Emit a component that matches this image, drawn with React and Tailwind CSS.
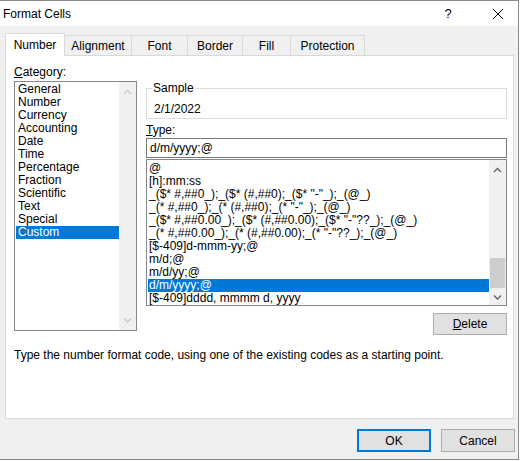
const categories = [
  "General",
  "Number",
  "Currency",
  "Accounting",
  "Date",
  "Time",
  "Percentage",
  "Fraction",
  "Scientific",
  "Text",
  "Special",
  "Custom",
];

const types = [
  "@",
  "[h]:mm:ss",
  '_($* #,##0_);_($* (#,##0);_($* "-"_);_(@_)',
  '_(* #,##0_);_(* (#,##0);_(* "-"_);_(@_)',
  '_($* #,##0.00_);_($* (#,##0.00);_($* "-"??_);_(@_)',
  '_(* #,##0.00_);_(* (#,##0.00);_(* "-"??_);_(@_)',
  "[$-409]d-mmm-yy;@",
  "m/d;@",
  "m/d/yy;@",
  "d/m/yyyy;@",
  "[$-409]dddd, mmmm d, yyyy",
];

const tabs = [
  { label: "Alignment", w: "w-[67px]" },
  { label: "Font", w: "w-[56px]" },
  { label: "Border", w: "w-[55px]" },
  { label: "Fill", w: "w-[48px]" },
  { label: "Protection", w: "w-[74px]" },
];

const Chevron = ({ down = false, color = "#606060" }) => (
  <svg width="9" height="6" viewBox="0 0 9 6">
    <path
      d={down ? "M1 1.5 L4.5 5 L8 1.5" : "M1 5 L4.5 1.5 L8 5"}
      fill="none"
      stroke={color}
      strokeWidth="1.3"
    />
  </svg>
);

const App = () => {
  return (
    <div className="w-[523px] h-[461px] bg-white overflow-hidden font-['Liberation_Sans',Arial,sans-serif] text-[12px] text-black">
      <div className="w-[519px] h-[460px] bg-[#f0f0f0] border-r border-b border-t border-[#8a8a8a] flex flex-col">
        {/* Title bar */}
        <div className="h-[25px] bg-white flex items-center pl-[3px] shrink-0">
          <span className="text-[12px]">Format Cells</span>
          <span className="ml-auto w-[12px] text-center text-[13px] mr-[38px]">?</span>
          <svg width="12" height="12" viewBox="0 0 12 12" className="mr-[14px]">
            <path d="M1 1 L11 11 M11 1 L1 11" stroke="#000" strokeWidth="1" />
          </svg>
        </div>

        {/* Tabs */}
        <div className="h-[29px] flex items-end pl-[5px] shrink-0">
          <div className="relative z-10 -mb-px w-[60px] h-[23px] bg-white border-l border-t border-r border-[#d9d9d9] flex items-center justify-center pb-[1px]">
            Number
          </div>
          {tabs.map((t) => (
            <div
              key={t.label}
              className={`${t.w} h-[20px] border-t border-r border-[#d9d9d9] flex items-center justify-center`}
            >
              {t.label}
            </div>
          ))}
        </div>

        {/* Panel */}
        <div className="ml-[5px] w-[509px] h-[364px] bg-white border border-[#d9d9d9] shrink-0 flex flex-col">
          <div className="flex items-start">
            {/* Left column */}
            <div className="ml-[8px] flex flex-col">
              <div className="mt-[9px] h-[15px] leading-[15px]">
                <span className="underline">C</span>ategory:
              </div>
              <div className="mt-[1px] w-[123px] h-[250px] border border-[#828790] flex">
                <div className="flex-1 pl-[1px] pt-[1px]">
                  {categories.map((c) => (
                    <div
                      key={c}
                      className={`h-[13px] leading-[13px] pl-[2px] ${
                        c === "Custom" ? "bg-[#0078d7] text-white" : ""
                      }`}
                    >
                      {c}
                    </div>
                  ))}
                </div>
                <div className="w-[17px] bg-[#f0f0f0] flex flex-col justify-between items-center py-[7px]">
                  <Chevron color="#c8c8c8" />
                  <Chevron down color="#c8c8c8" />
                </div>
              </div>
            </div>

            {/* Right column */}
            <div className="ml-[9px] w-[361px] flex flex-col">
              <fieldset className="mt-[25px] border border-[#dcdcdc] pl-[7px] pt-[6px] pb-[1px]">
                <legend className="-ml-[2px] px-[1px] leading-[15px]">Sample</legend>
                <div className="leading-[15px]">2/1/2022</div>
              </fieldset>
              <div className="mt-[4px] h-[15px] leading-[15px]">
                <span className="underline">T</span>ype:
              </div>
              <div className="h-[20px] border border-[#7a7a7a] pl-[3px] flex items-center">
                d/m/yyyy;@
              </div>
              <div className="mt-[1px] h-[147px] border border-[#828790] flex">
                <div className="flex-1 pl-[1px] pt-[2px]">
                  {types.map((t) => (
                    <div
                      key={t}
                      className={`h-[13px] leading-[13px] pl-[1px] whitespace-pre ${
                        t === "d/m/yyyy;@" ? "bg-[#0078d7] text-white" : ""
                      }`}
                    >
                      {t}
                    </div>
                  ))}
                </div>
                <div className="w-[17px] bg-[#f0f0f0] flex flex-col">
                  <div className="h-[17px] flex items-center justify-center pt-[3px]">
                    <Chevron />
                  </div>
                  <div className="flex-1" />
                  <div className="h-[30px] mx-[1px] bg-[#cdcdcd]" />
                  <div className="h-[17px] flex items-center justify-center">
                    <Chevron down />
                  </div>
                </div>
              </div>
              <div className="mt-[7px] self-end w-[74px] h-[22px] bg-[#e1e1e1] border border-[#adadad] flex items-center justify-center">
                <span>
                  <span className="underline">D</span>elete
                </span>
              </div>
            </div>
          </div>
          <div className="mt-[13px] ml-[8px] h-[15px] leading-[15px]">
            Type the number format code, using one of the existing codes as a starting point.
          </div>
        </div>

        {/* Buttons */}
        <div className="mt-[10px] flex justify-end gap-[10px] pr-[3px]">
          <div className="w-[74px] h-[23px] bg-[#e1e1e1] border-2 border-[#0078d7] flex items-center justify-center">
            OK
          </div>
          <div className="w-[74px] h-[23px] bg-[#e1e1e1] border border-[#adadad] flex items-center justify-center">
            Cancel
          </div>
        </div>
      </div>
    </div>
  );
};

export default App;
